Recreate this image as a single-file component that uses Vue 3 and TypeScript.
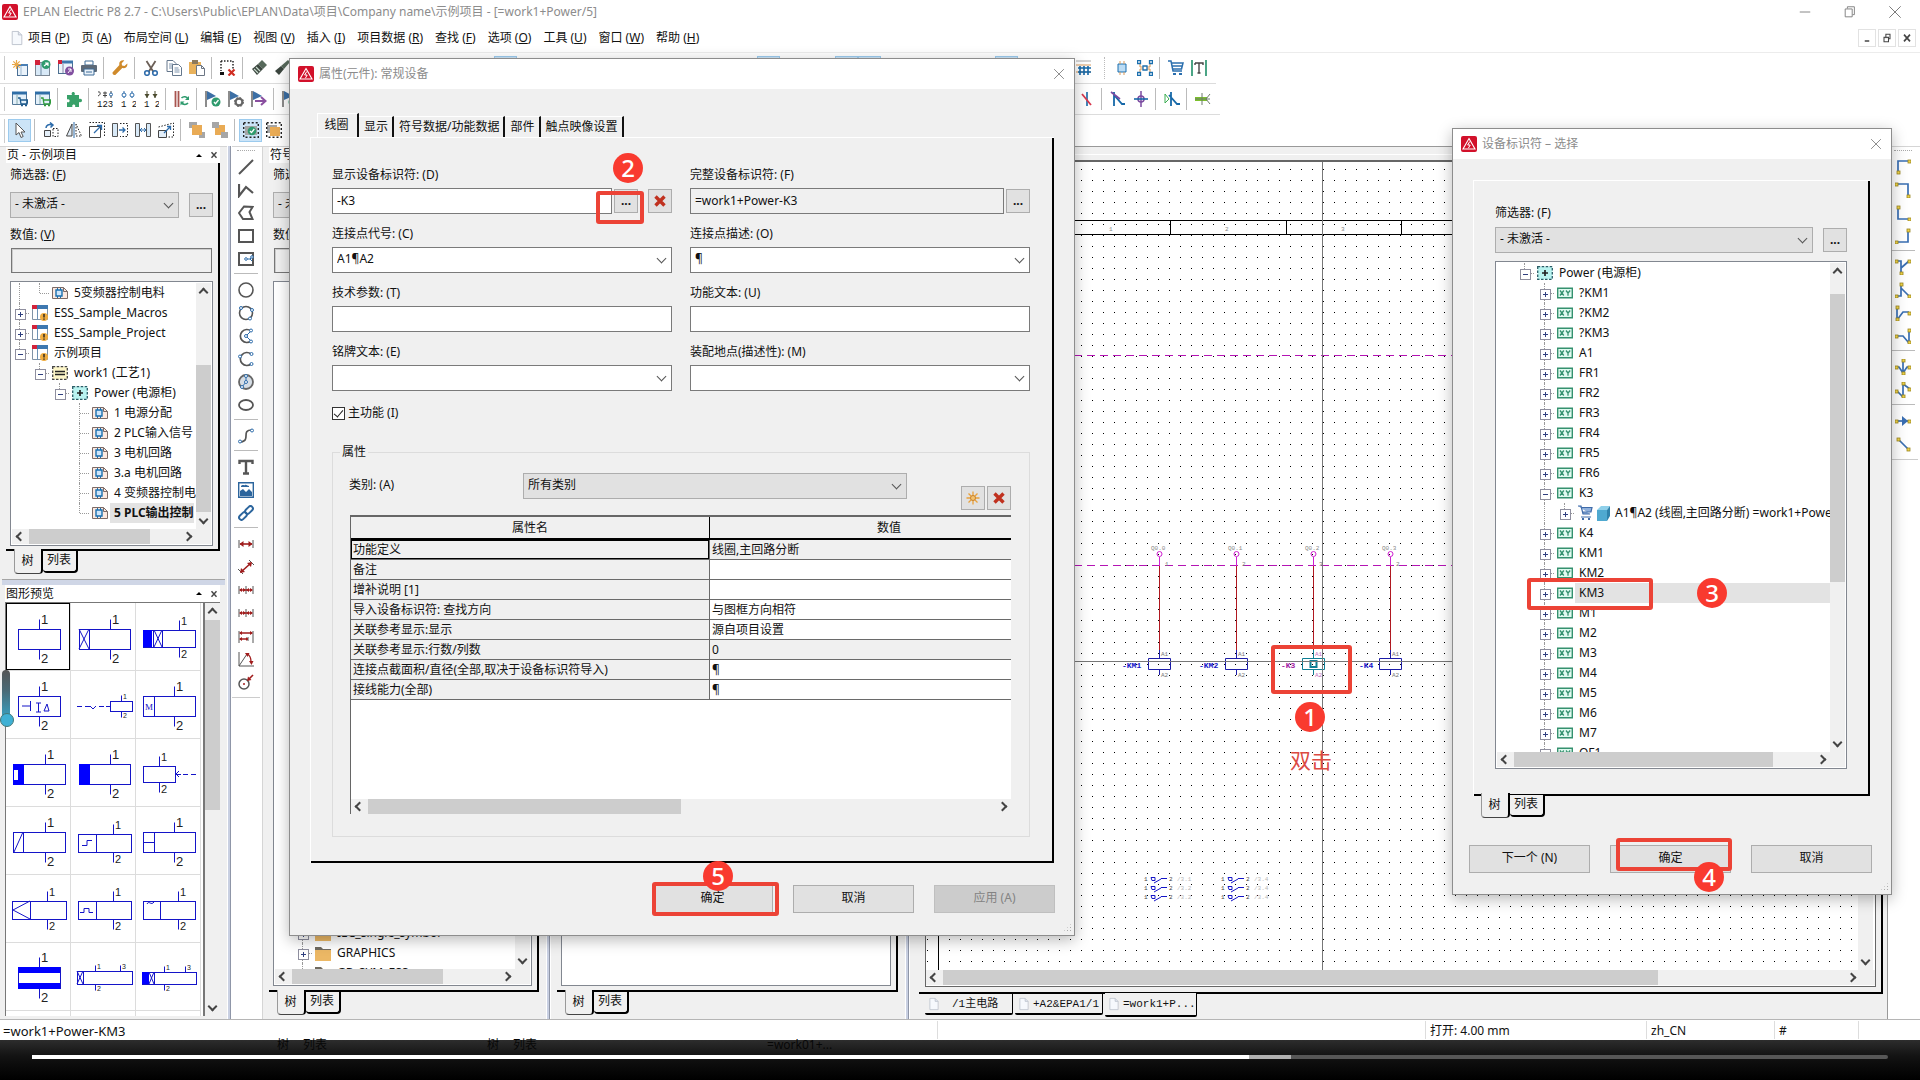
<script setup lang="ts">
import { ref } from 'vue'

interface TreeRow {
  cells: string[]
  icons: string[]
  text: string
  selected?: boolean
  bold?: boolean
}
interface Preview {
  x: number
  y: number
  w: number
  h: number
  stem: number
  size: number
  extra: string
  third?: number
}
interface Field {
  id: string
  label: string
  value: string
  kind: 'text' | 'combo' | 'pick' | 'readonly'
}

const icons: Record<string, string> = {
  logo: '<rect width="16" height="16" rx="2" fill="#d2112b"/><path d="M8 2.5 14 13H2Z" fill="none" stroke="#fff" stroke-width="1.1"/><path d="M8.8 5.5 6.6 9h2.6L7.4 12.2" fill="none" stroke="#fff" stroke-width="1"/>',
  file: '<path d="M2.5.5h7l4 4v11h-11z" fill="#f6f9fd" stroke="#b9bfca"/><path d="M9.5.5v4h4" fill="#dfe5ee" stroke="#b9bfca"/>',
  newProj: '<rect x="5.500" y="4.500" width="10" height="11" fill="#eaf3fb" stroke="#4a6f95"/><path d="M5 5h11" stroke="#4a7fb5" stroke-width="2"/><path d="M9 6v10" stroke="#9fb8cf"/><path d="M4.500 0v9M0 4.500h9M1.300 1.300l6.400 6.400M7.700 1.300 1.300 7.700" stroke="#e9a848" stroke-width="1.200"/>',
  openProj: '<rect x=".5" y="2.500" width="14" height="13" fill="#d8e9f7" stroke="#7b8794"/><path d="M6 3v12" stroke="#6f8aa3"/><path d="M0 0h5v5H0z" fill="#d2233a"/><circle cx="11" cy="4.500" r="4.500" fill="#2f9b6e"/><path d="m9 6 4-3m-3 0h3v3" stroke="#fff" stroke-width="1.200" fill="none"/>',
  closeProj: '<rect x=".5" y="1.500" width="14" height="12" fill="#eef5fb" stroke="#4d6f90"/><path d="M0 2h15" stroke="#3f77ad" stroke-width="3"/><path d="M5 4v9" stroke="#88a"/><path d="M0 0h4v4H0z" fill="#d2233a"/><circle cx="11.500" cy="11" r="4.500" fill="#8250a0"/><path d="m10 13 3-4m-3 0h3v3" stroke="#fff" fill="none"/>',
  print: '<path d="M4 1h8v4H4z" fill="#fff" stroke="#3f6c98"/><rect x="0" y="5" width="16" height="7" rx="1" fill="#5d6a78"/><path d="M3 9h10v6H3z" fill="#e9f1f9" stroke="#3f6c98"/><path d="M5 12h6" stroke="#3f6c98"/>',
  wrench: '<path d="M15.300 3.500 12.500 6 10 5.500 9.700 3.200 12.300.5c-3-.8-5.800 1.300-4.900 4.600L.7 12.300c-.8 1.400 1 3.400 2.600 2.600l7-6.900c3 .8 5.600-1.400 5-4.500Z" fill="#cf8a2b"/>',
  cut: '<path d="M3.500 1 10.500 12M12.500 1 5.500 12" stroke="#6b5f57" stroke-width="1.800"/><circle cx="4" cy="13" r="2.300" fill="none" stroke="#2f6cab" stroke-width="1.600"/><circle cx="12" cy="13" r="2.300" fill="none" stroke="#2f6cab" stroke-width="1.600"/>',
  copy: '<path d="M1 .5h6l3 3v8H1z" fill="#fff" stroke="#64778c"/><path d="M3 4h4M3 6h4M3 8h4" stroke="#7e95ae"/><path d="M6.500 4.500h6l3 3v8h-9z" fill="#fff" stroke="#64778c"/><path d="M8.500 8h4M8.500 10h5M8.500 12h5" stroke="#7e95ae"/>',
  paste: '<path d="M0 2h12v12H0z" fill="#e9b25c"/><path d="M3 0h6v4H3z" fill="#8d7a5c"/><path d="M7.500 5.500h5l3 3v7h-8z" fill="#fff" stroke="#6c7684"/><path d="M12.500 5.500v3h3" fill="none" stroke="#6c7684"/>',
  delSel: '<path d="M1 1h12v8M1 1v10" fill="none" stroke="#222" stroke-width="1.500" stroke-dasharray="1.500 1.500"/><path d="M0 12h4v3H0z" fill="#111"/><path d="m8.500 9.500 6 6m0-6-6 6" stroke="#d02d22" stroke-width="2.200"/>',
  brush: '<path d="M11 0 16 5 12 9 7 4Z" fill="#57695b"/><path d="M7 4 12 9 6 15 1 9Z" fill="#3b463f"/><path d="m3 9 4 4m-2-6 4 4" stroke="#c6d8cb" stroke-width="1.200"/>',
  brush2: '<path d="M14 0 16 2 10 9 7 6Z" fill="#57695b"/><path d="M7 6 10 9 5 15 1 11Z" fill="#3b463f"/>',
  cartWin: '<path d="M.5 1.500h14v12H.5z" fill="#e3f0fa" stroke="#527797"/><path d="M0 2h15" stroke="#2f6ea7" stroke-width="3"/><path d="M5 4v9" stroke="#8aa"/><path d="M6 7h2l1 6h6l1-4H8.500" fill="none" stroke="#1d5a8d" stroke-width="1.300"/><path d="M9 14.500h2m2 0h2" stroke="#1d5a8d" stroke-width="1.600"/>',
  cartWin2: '<path d="M.5 1.500h14v12H.5z" fill="#e3f0fa" stroke="#527797"/><path d="M0 2h15" stroke="#2f6ea7" stroke-width="3"/><path d="M5 4v9" stroke="#8aa"/><path d="M6 7h2l1 6h6l1-4H8.500" fill="none" stroke="#2f9a3c" stroke-width="1.300"/><path d="M9 14.500h2m2 0h2" stroke="#2f9a3c" stroke-width="1.600"/>',
  puzzle: '<path d="M1 4h5C4 0 10.500 0 8.500 4H13v4c4-1.500 4 4.500 0 3V16H9c1.500-3.500-4-3.500-2.500 0H1v-5c3.500 1.500 3.500-4 0-2.500Z" fill="#38a169"/>',
  num3: '<path d="M1 1c3-1 3 3 0 4M6 2h4M6 4.500h4M8 .5v6M14 0v7" stroke="#444" fill="none"/><circle cx="14" cy="3.500" r="1.500" fill="#fff" stroke="#2d6cab"/><text x="0" y="15.500" font-size="9" font-family="Liberation Mono" fill="#111">123</text>',
  num2: '<path d="M4 0v7M12 0v7" stroke="#2d6cab"/><circle cx="4" cy="4" r="2" fill="#fff" stroke="#2d6cab"/><circle cx="12" cy="4" r="2" fill="#fff" stroke="#2d6cab"/><text x="1" y="15.500" font-size="9" font-family="Liberation Mono" fill="#111">1 2</text>',
  num2b: '<path d="M4 0v7M12 0v7" stroke="#4b4b2f"/><path d="m1.500 3 2.500 4 2.500-4zM9.500 3l2.500 4 2.500-4z" fill="#4b4b2f"/><text x="1" y="15.500" font-size="9" font-family="Liberation Mono" fill="#111">1 2</text>',
  refresh: '<path d="M1.500 0v16M4.500 0v16" stroke="#a8544f" stroke-width="1.800"/><path d="M14 8A4 4 0 0 0 7.500 7M7.500 11.500A4 4 0 0 0 14 12" fill="none" stroke="#2f9b6e" stroke-width="1.600"/><path d="M15 5v4h-4zM6.500 14.500v-4h4z" fill="#2f9b6e"/>',
  flagOk: '<path d="M1 0v16" stroke="#666" stroke-width="1.500"/><path d="M2 0 11 5 2 9Z" fill="#3c6fa5"/><circle cx="11" cy="11" r="4.500" fill="#2f9b6e"/><path d="m9 11 1.500 1.700L13.500 9" fill="none" stroke="#fff" stroke-width="1.300"/>',
  flagGear: '<path d="M1 0v16" stroke="#666" stroke-width="1.500"/><path d="M2 0 11 5 2 9Z" fill="#3c6fa5"/><circle cx="11" cy="11" r="3.400" fill="none" stroke="#666" stroke-width="2.200"/><circle cx="11" cy="11" r="4.600" fill="none" stroke="#666" stroke-dasharray="1.800 1.800"/>',
  flagGo: '<path d="M1 0v16" stroke="#666" stroke-width="1.500"/><path d="M2 0 11 5 2 9Z" fill="#3c6fa5"/><path d="M4 10h10M10 6l4.500 4-4.500 4" fill="none" stroke="#8a4fa0" stroke-width="2"/>',
  pointer: '<path d="M4 1v12l3-2.500L9 15.500l2.200-1L9 10h4Z" fill="#fff" stroke="#555"/>',
  rotate: '<path d="M1.500 8.500h6v6h-6z" fill="#e3eef8" stroke="#444"/><path d="M10 6.500h5v8h-5z" fill="none" stroke="#222" stroke-dasharray="1.500 1.500"/><path d="M3 6c0-3 3-4 6-3M7 .5 10 3 7.500 5.500" fill="none" stroke="#2d6cab" stroke-width="1.500"/>',
  mirror: '<path d="M6 2v12H.5Z" fill="#e3eef8" stroke="#444"/><path d="M8 0v16" stroke="#2d6cab"/><path d="M10 2v12h5.500Z" fill="none" stroke="#222" stroke-dasharray="1.500 1.500"/>',
  scale: '<path d="M.5 4.500h11v11H.5z" fill="none" stroke="#444"/><path d="M.5.5h15v15" fill="none" stroke="#222" stroke-dasharray="1.500 1.500"/><path d="M5 11 12 4M8 3.500h4.500V8" fill="none" stroke="#2d6cab" stroke-width="1.300"/>',
  stretch: '<path d="M.5 1.500h5v13h-5z" fill="#d8e9f7" stroke="#555"/><path d="M8 1.500h7.500v13H8" fill="none" stroke="#222" stroke-dasharray="1.500 1.500"/><path d="M7 8h6m-2.500-2.500L13 8l-2.500 2.500" fill="none" stroke="#2d6cab" stroke-width="1.300"/>',
  spread: '<path d="M.5 1.500h4v13h-4zM11.500 1.500h4v13h-4z" fill="#d8e9f7" stroke="#555"/><path d="M5 8h6M9 6l2 2-2 2M7 6 5 8l2 2" fill="none" stroke="#2d6cab"/>',
  skew: '<path d="M.5 8.500h8v7h-8z" fill="#e3eef8" stroke="#444"/><path d="m.5 5 15-4v14H10" fill="none" stroke="#222" stroke-dasharray="1.500 1.500"/><path d="m6 11 6-6M9 4.500h3.500V8" fill="none" stroke="#2d6cab" stroke-width="1.300"/>',
  front: '<path d="M0 0h8v6H0zM10 10h6v6h-6z" fill="#a6a6a6"/><path d="M3 3h10v10H3z" fill="#e9ab55"/>',
  back: '<path d="M3 3h10v10H3z" fill="#e9ab55"/><path d="M0 0h7v6H0zM9 10h7v6H9z" fill="#a6a6a6"/>',
  group: '<path d="M2 4h12v9H2z" fill="#a6a6a6"/><path d="M.7.700h14.600v14.600H.7z" fill="none" stroke="#222" stroke-width="1.400" stroke-dasharray="2 2"/><circle cx="9" cy="9" r="4.300" fill="#2f9b6e"/><path d="m7 9 1.500 1.600L11.300 7" stroke="#fff" fill="none" stroke-width="1.300"/>',
  ungroup: '<path d="M1 3h10v8H1z" fill="#a6a6a6"/><path d="M4 5h10v9H4z" fill="#e9ab55"/><path d="M.7.700h14.600v14.600H.7z" fill="none" stroke="#222" stroke-width="1.400" stroke-dasharray="2 2"/>',
  hatch: '<path d="M0 1h15" stroke="#aaa"/><path d="M0 5h15M0 12h15" stroke="#d99a5a"/><path d="M4 6v9M8 6v9M12 6v9M2 8h13M2 12h13" stroke="#1668a8" stroke-width="1.600"/>',
  device: '<path d="M4 4h8v8H4z" fill="#bcdcf4" stroke="#1b6fae"/><path d="M6 1v3M10 1v3M6 12v3M10 12v3" stroke="#d99a5a"/>',
  net: '<path d="M3 2v5h10V2M3 14V9M13 14V9M3 9h10" stroke="#d9954f" fill="none"/><path d="M.5.5h3v3h-3zM12.500.5h3v3h-3zM.5 12.500h3v3h-3zM12.500 12.500h3v3h-3zM6 6h4v4H6z" fill="#fff" stroke="#1b6fae" stroke-width="1.300"/>',
  cart: '<path d="M0 1h3l2 10h9M4 3h11l-1.500 6H5M4.500 6H14" fill="none" stroke="#2b6fae" stroke-width="1.500"/><path d="M5 14h3m3 0h3" stroke="#2b6fae" stroke-width="2"/>',
  textT: '<path d="M1 0v16M15 0v16" stroke="#1e8f68" stroke-width="1.600"/><path d="M4 3h8v2M8 3v10M6.500 13h3M4 3v2" fill="none" stroke="#444" stroke-width="1.400"/>',
  sym1: '<path d="M8 1v14" stroke="#1668a8" stroke-width="1.600"/><path d="m3 3 9 11" stroke="#d8374d" stroke-width="1.800"/>',
  sym2: '<path d="M4 1v14M4 4l8 9h3" stroke="#1668a8" stroke-width="1.800" fill="none"/><path d="m1 1 9 7" stroke="#7a4aa0" stroke-width="1.600"/>',
  sym3: '<path d="M8 0v16" stroke="#7a4aa0" stroke-width="1.500"/><circle cx="8" cy="8" r="3" fill="none" stroke="#7a4aa0" stroke-width="1.500"/><path d="M1 8h14" stroke="#1668a8" stroke-width="1.600"/>',
  sym4: '<path d="M7 1v14M5 4l8 9h3" stroke="#1668a8" stroke-width="1.800" fill="none"/><path d="M1 3v9l4-4z" fill="none" stroke="#3cae52"/>',
  sym5: '<path d="M0 8h12" stroke="#7cc02c" stroke-width="4"/><path d="M7 2v12M0 8h15M15 3l-4 5 4 5" stroke="#6c7a6c" fill="none"/>',
  dLine: '<path d="M1 15 15 1" stroke="#555" stroke-width="2"/>',
  dPoly: '<path d="M1 2v12l7-9 7 6" fill="none" stroke="#555" stroke-width="2.200"/>',
  dPolygon: '<path d="m6 1.500 8.500.500-3 5 3 7H5L1 8Z" fill="none" stroke="#555" stroke-width="2"/>',
  dRect: '<path d="M1 2h14v12H1z" fill="none" stroke="#555" stroke-width="2"/>',
  dRectC: '<path d="M1 2h14v12H1z" fill="none" stroke="#555" stroke-width="2"/><path d="M7 8h5l2-2m-2 2 2 2" stroke="#2d6cab" fill="none"/><circle cx="8" cy="8" r="1.300" fill="#fff" stroke="#2d6cab"/><circle cx="14" cy="6" r="1.300" fill="#fff" stroke="#2d6cab"/>',
  dCircle: '<circle cx="8" cy="8" r="7" fill="none" stroke="#555" stroke-width="1.600"/>',
  dCircle3: '<circle cx="8" cy="8" r="6.500" fill="none" stroke="#555" stroke-width="1.600"/><g fill="#fff" stroke="#2d6cab"><circle cx="3" cy="3" r="1.500"/><circle cx="14" cy="5" r="1.500"/><circle cx="12" cy="13.500" r="1.500"/></g>',
  dArc: '<path d="M13 3A6.500 6.500 0 1 0 13 13" fill="none" stroke="#555" stroke-width="1.700"/><path d="m13 3-5 5 5 5" fill="none" stroke="#2d6cab"/><g fill="#fff" stroke="#2d6cab"><circle cx="13" cy="2.500" r="1.500"/><circle cx="8" cy="8" r="1.500"/><circle cx="13" cy="13.500" r="1.500"/></g>',
  dArc3: '<path d="M13 3A6.500 6.500 0 1 0 13 13" fill="none" stroke="#555" stroke-width="1.700"/><g fill="#fff" stroke="#2d6cab"><circle cx="13.500" cy="3" r="1.500"/><circle cx="2" cy="5.500" r="1.500"/><circle cx="13.500" cy="13" r="1.500"/></g>',
  dSector: '<circle cx="8" cy="8" r="7" fill="#d5dde5" stroke="#666" stroke-width="1.800"/><path d="M8 1v7l-4 5" fill="none" stroke="#2d6cab"/><g fill="#fff" stroke="#2d6cab"><circle cx="8" cy="2" r="1.500"/><circle cx="8" cy="8" r="1.500"/><circle cx="4" cy="13" r="1.500"/></g>',
  dEllipse: '<ellipse cx="8" cy="8" rx="7" ry="5" fill="none" stroke="#555" stroke-width="1.800"/>',
  dSpline: '<path d="M2 14c12-1 0-12 12-12" fill="none" stroke="#555" stroke-width="1.700"/><g fill="#fff" stroke="#2d6cab"><circle cx="2" cy="13.500" r="1.500"/><circle cx="14" cy="2.500" r="1.500"/></g>',
  dText: '<path d="M1.500 5V2h13v3M8 2v12M5 14.500h6" fill="none" stroke="#555" stroke-width="2.400"/>',
  dImage: '<path d="M.7.700h14.600v14.600H.7z" fill="#fff" stroke="#2c659d" stroke-width="1.400"/><path d="M2 14V9l3-2 3 3 3-3 3 3v4Z" fill="#2c659d"/><path d="M3 4c2-2 3 0 4-1s3 1 4 1v1H3z" fill="#2c659d"/>',
  dLink: '<g fill="none" stroke="#2c659d" stroke-width="1.900"><rect x="-4.500" y="-2.400" width="9" height="4.800" rx="2.400" transform="translate(5 11) rotate(-45)"/><rect x="-4.500" y="-2.400" width="9" height="4.800" rx="2.400" transform="translate(11 5) rotate(-45)"/></g>',
  dimH: '<path d="M1 4v8M15 4v8" stroke="#555"/><path d="M2 8h12" stroke="#a01c1c" stroke-width="1.600"/><path d="m1.500 8 4-3v6zM14.500 8l-4-3v6z" fill="#a01c1c"/>',
  dimA: '<path d="m0 10 5 5M11 1l5 5" stroke="#555"/><path d="m3 13 10-9" stroke="#a01c1c" stroke-width="1.600"/><path d="m2 14 1-5 4 4zM14 3l-1 5-4-4z" fill="#a01c1c"/>',
  dimC: '<path d="M1 4v8M8 4v8M15 4v8" stroke="#555"/><path d="M2 8h12" stroke="#a01c1c" stroke-width="1.400"/><path d="m1 8 3-2v4zM8 8 5 6v4zM8 8l3-2v4zM15 8l-3-2v4z" fill="#a01c1c"/>',
  dimB: '<path d="M1 3v12M15 3v12M10 9v4" stroke="#555"/><path d="M2 5h12M2 11h8" stroke="#a01c1c" stroke-width="1.500"/><path d="m1 5 3-2v4zM15 5l-3-2v4zM1 11l3-2v4zM10 11 8 9v4z" fill="#a01c1c"/>',
  dimAng: '<path d="M1 1v14h15M1 15 9 3" fill="none" stroke="#555"/><path d="M9 3c3 1 4 4 4 8" fill="none" stroke="#a01c1c" stroke-width="1.300"/><path d="m7 2 4.500 0-2 4zM11 10h4.500l-2 4z" fill="#a01c1c"/>',
  dimRad: '<circle cx="6" cy="10" r="5" fill="none" stroke="#555" stroke-width="1.500"/><circle cx="6" cy="10" r="1" fill="#a01c1c"/><path d="m10 6 5-5" stroke="#a01c1c" stroke-width="1.600"/><path d="m9 7 1-4.500 3.500 3.500z" fill="#a01c1c"/>',
  treeProj: '<path d="M.5 1.500h15v13H.5z" fill="#fff" stroke="#8193a5"/><path d="M0 2h16" stroke="#3e78b0" stroke-width="4"/><path d="M0 0h5v4H0z" fill="#d2233a"/><path d="M5.500 4v11" stroke="#6f93b6"/><circle cx="12" cy="12" r="4" fill="#f0ac3e"/><path d="M12 9v3.500M12 13.500v1.300" stroke="#222" stroke-width="1.400"/>',
  treePage: '<path d="M.5 2.500h11l4 4v7H.5z" fill="#fce9e0" stroke="#7b6a66"/><path d="M11.500 2.500v4h4" fill="none" stroke="#7b6a66"/><path d="M4 5h6v6H4z" fill="#cfe6fb" stroke="#1b6fae" stroke-width="1.400"/><path d="M5.500 3v2M8.500 3v2M5.500 11v2M8.500 11v2" stroke="#1b6fae"/>',
  treeHigh: '<path d="M.7 1.700h14.600v12.600H.7z" fill="#fdf6c8" stroke="#444" stroke-width="1.300" stroke-dasharray="2.500 1.500"/><path d="M3 6.500h10M3 9.500h10" stroke="#222" stroke-width="1.500"/>',
  treePlace: '<path d="M.7 1.700h14.600v12.600H.7z" fill="#b9f3f0" stroke="#2a5c66" stroke-width="1.300" stroke-dasharray="2.500 1.500"/><path d="M5 8h6M8 5v6" stroke="#222" stroke-width="1.700"/>',
  treeXY: '<path d="M.7 3.200h14.600v9.600H.7z" fill="#e0faf0" stroke="#35916f" stroke-width="1.400"/><path d="m3 5.500 3.800 5M6.800 5.500 3 10.500M9 5.500l2 2.500m2.200-2.500L11 8v2.700" stroke="#35916f" stroke-width="1.300" fill="none"/>',
  treeCart: '<path d="M1 1h3l2 8h7M5 2.500h10L14 7H5.500" fill="#8fb0dc" stroke="#3f6aa8" stroke-width="1.200"/><path d="M4 12h10" stroke="#3f6aa8"/><path d="M5 14h2m4 0h2" stroke="#3f6aa8" stroke-width="2"/>',
  treeCube: '<path d="M2 5 6 1h9l-3 4Z" fill="#8fd0ea"/><path d="M2 5h10v11H2z" fill="#4fa9d0"/><path d="M12 5l3-4v10l-3 5z" fill="#2f82ab"/>',
  treeFolder: '<path d="M0 2h6l2 2h8v2H0z" fill="#6f6a60"/><path d="M0 5h16v11H0z" fill="#ecb865"/>',
  star: '<path d="M8 1.500v13M1.500 8h13M3.500 3.500l9 9m0-9-9 9" stroke="#e9a03a" stroke-width="1.300"/><circle cx="8" cy="8" r="2.500" fill="#f3c26f" stroke="#c9822b"/>',
  cross: '<path d="m3.500 3.500 9 9m0-9-9 9" stroke="#c0311f" stroke-width="3.400"/>',
  x: '<path d="m1.500 1.500 13 13m0-13-13 13" stroke="#777" stroke-width="1.100"/>',
  min: '<path d="M2 8h12" stroke="#777"/>',
  restore: '<path d="M2.500 4.500h8v9h-8zM5 4V2h8v9h-2" fill="none" stroke="#777"/>',
  mMin: '<path d="M5 12h6" stroke="#444" stroke-width="2"/>',
  mRest: '<path d="M4 7h6v6H4zM6.500 6.500V3H12v6h-2" fill="none" stroke="#444" stroke-width="1.400"/><path d="M4 7.500h6" stroke="#444"/>',
  mX: '<path d="m4 3.500 8 9m0-9-8 9" stroke="#444" stroke-width="2.200"/>',
}

const node = (x: number, y: number): string =>
  `<rect x="${x - 1}" y="${y - 1}" width="3" height="3" fill="#f0d54a" stroke="#9a8420" stroke-width=".8"/>`
const wire = (d: string, pts: number[][]): string =>
  `<path d="${d}" fill="none" stroke="#3a6fb3" stroke-width="1.700"/>` + pts.map((p) => node(p[0], p[1])).join('')
Object.assign(icons, {
  w1: wire('M3 13V2h12', [[3, 13], [14, 2]]),
  w2: wire('M2 2h11v12', [[1, 2], [13, 14]]),
  w3: wire('M3 2v12h12', [[3, 2], [14, 14]]),
  w4: wire('M2 14h11V3', [[1, 14], [13, 2]]),
  w5: wire('M2 2h4v12M6 9l8-7', [[1, 2], [14, 2], [6, 14]]),
  w6: wire('M6 2v12H2M6 6l8 8', [[6, 2], [1, 14], [14, 14]]),
  w7: wire('M2 2v13l6-8h6', [[2, 2], [2, 14], [14, 8]]),
  w8: wire('M2 8h6l6 7V2', [[1, 8], [14, 2], [14, 14]]),
  w9: wire('M8 1v14M2 8h2l4 6 4-6h3', [[8, 1], [1, 8], [14, 8], [8, 14]]),
  w10: wire('M8 1v14L2 9M8 2l7 5', [[8, 1], [1, 9], [14, 7], [8, 14]]),
  w11: '<path d="M1 8h14" stroke="#3a6fb3" stroke-width="1.700"/><path d="M7 3v10l6-5z" fill="#3a6fb3"/>' + node(1, 8) + node(14, 8),
  w12: wire('m3 3 10 10', [[3, 3], [13, 13]]),
})

const menus: [string, string][] = [
  ['项目', 'P'], ['页', 'A'], ['布局空间', 'L'], ['编辑', 'E'], ['视图', 'V'], ['插入', 'I'],
  ['项目数据', 'R'], ['查找', 'F'], ['选项', 'O'], ['工具', 'U'], ['窗口', 'W'], ['帮助', 'H'],
]

const toolbars: (string | number)[][] = [
  ['newProj', 'openProj', 'closeProj', 'print', '|', 'wrench', '|', 'cut', 'copy', 'paste', '|', 'delSel', '|', 'brush', 'brush2',
    201, 'on', 240, 'on', 55, 'on', 'on', 114, 'on', 54, 'hatch', 9, ':', 'device', 'net', '|', 'cart', 'textT'],
  ['cartWin', 'cartWin2', '|', 'puzzle', '|', 'num3', 'num2', 'num2b', '|', 'refresh', '|', 'flagOk', 'flagGear', 'flagGo', '|', 'flagOk',
    774, 'sym1', '|', 'sym2', 'sym3', '|', 'sym4', '|', 'sym5'],
  ['pointer', '|', 'rotate', 'mirror', 'scale', 'stretch', 'spread', 'skew', '|', 'front', 'back', '|', 'group', 'ungroup'],
]
const active = new Set(['pointer', 'group', 'on'])

const drawTools = ['dLine', 'dPoly', 'dPolygon', 'dRect', 'dRectC', '|', 'dCircle', 'dCircle3', 'dArc', 'dArc3', 'dSector', 'dEllipse', '|',
  'dSpline', '|', 'dText', 'dImage', 'dLink', '|', 'dimH', 'dimA', 'dimC', 'dimC', 'dimB', 'dimAng', 'dimRad']
const wireTools = ['w1', 'w2', 'w3', 'w4', '|', 'w5', 'w6', 'w7', 'w8', '|', 'w9', 'w10', '|', 'w11', 'w12']

const pageTree: TreeRow[] = [
  { cells: ['v', 'l'], icons: ['treePage'], text: '5变频器控制电料' },
  { cells: ['+'], icons: ['treeProj'], text: 'ESS_Sample_Macros' },
  { cells: ['+'], icons: ['treeProj'], text: 'ESS_Sample_Project' },
  { cells: ['-'], icons: ['treeProj'], text: '示例项目' },
  { cells: ['', '-'], icons: ['treeHigh'], text: 'work1 (工艺1)' },
  { cells: ['', '', '-'], icons: ['treePlace'], text: 'Power (电源柜)' },
  { cells: ['', '', '', 't'], icons: ['treePage'], text: '1 电源分配' },
  { cells: ['', '', '', 't'], icons: ['treePage'], text: '2 PLC输入信号' },
  { cells: ['', '', '', 't'], icons: ['treePage'], text: '3 电机回路' },
  { cells: ['', '', '', 't'], icons: ['treePage'], text: '3.a 电机回路' },
  { cells: ['', '', '', 't'], icons: ['treePage'], text: '4 变频器控制电' },
  { cells: ['', '', '', 'l'], icons: ['treePage'], text: '5 PLC输出控制', selected: true, bold: true },
]
const symbolTree: TreeRow[] = ['IEC_single_symbol', 'GRAPHICS', 'GB_SYM_ESS'].map((text) => ({ cells: ['', '+'], icons: ['treeFolder'], text }))

const device = (text: string): TreeRow => ({ cells: ['', '', text === 'K3' ? '=' : '+'], icons: ['treeXY'], text, selected: text === 'KM3' })
const deviceTree: TreeRow[] = [
  { cells: ['', '-'], icons: ['treePlace'], text: 'Power (电源柜)' },
  ...['?KM1', '?KM2', '?KM3', 'A1', 'FR1', 'FR2', 'FR3', 'FR4', 'FR5', 'FR6', 'K3'].map(device),
  { cells: ['', '', 'v', '-+'], icons: ['treeCart', 'treeCube'], text: 'A1¶A2 (线圈,主回路分断) =work1+Power-K3' },
  ...['K4', 'KM1', 'KM2', 'KM3', 'M1', 'M2', 'M3', 'M4', 'M5', 'M6', 'M7', 'QF1'].map(device),
]

const blue = 'fill="none" stroke="#1414c8"'
const previews: Preview[] = [
  { x: 12, y: 26, w: 42, h: 20, stem: 33, size: 13, extra: '' },
  { x: 8, y: 26, w: 51, h: 20, stem: 39, size: 13, extra: `<path d="M18.500 26v20M8 26l10 20M18 26 8 46" ${blue}/>` },
  { x: 7, y: 27, w: 52, h: 17, stem: 43, size: 11, extra: `<path d="M7 27h9v17H7z" fill="#00f"/><path d="M17.500 27v17M26.500 27v17M18 27l8 17M26 27l-8 17" ${blue}/>` },
  { x: 12, y: 25, w: 42, h: 20, stem: 33, size: 13, extra: `<path d="M16 35h8M24.500 30v10M30 32h5M32.500 32v9M30 41h5M41 33l-3 7h5z" ${blue}/>` },
  { x: 39, y: 30, w: 22, h: 10, stem: 50, size: 7, extra: `<path d="M6 35.500h5M14 35.500h5M19 35l3 3 3-3M28 35.500h5M35 35.500h4" ${blue}/>` },
  { x: 7, y: 25, w: 52, h: 20, stem: 38, size: 13, extra: `<path d="M18.500 25v20" ${blue}/><text x="9" y="39" font-size="9" fill="#1414c8" font-family="Liberation Serif">M</text>` },
  { x: 7, y: 25, w: 52, h: 20, stem: 39, size: 13, extra: '<path d="M7 25h11v21H7z" fill="#00f"/><path d="M8 31h4v10H8z" fill="#fff"/>' },
  { x: 8, y: 25, w: 51, h: 20, stem: 39, size: 13, extra: '<path d="M8 25h11v21H8z" fill="#00f"/>' },
  { x: 7, y: 27, w: 32, h: 16, stem: 23, size: 11, extra: `<path d="M39 35.500h6M43 32l-3 3 3 3M47 35.500h5M55 35.500h5" ${blue}/>` },
  { x: 7, y: 25, w: 52, h: 20, stem: 39, size: 13, extra: `<path d="M17.500 25v20M8 45l9-20" ${blue}/>` },
  { x: 7, y: 27, w: 53, h: 18, stem: 42, size: 11, extra: `<path d="M25.500 27v18M11 38.500h5v-5h5" ${blue}/>` },
  { x: 7, y: 25, w: 52, h: 20, stem: 38, size: 13, extra: `<path d="M18.500 25v20M7 35.500h11" ${blue}/>` },
  { x: 6, y: 26, w: 54, h: 18, stem: 41, size: 11, extra: `<path d="M24.500 26v18M24 26 7 35l17 9" ${blue}/>` },
  { x: 7, y: 26, w: 53, h: 18, stem: 42, size: 11, extra: `<path d="M25.500 26v18M9 37.500h4v-4h5v4h4" ${blue}/>` },
  { x: 7, y: 26, w: 52, h: 18, stem: 42, size: 11, extra: `<path d="M24.500 26v18M11 29c2-4 4 2 7-2" ${blue}/>` },
  { x: 12, y: 24, w: 42, h: 21, stem: 33, size: 13, extra: '<path d="M12 24h42v6H12zM12 40h42v6H12z" fill="#00f"/>' },
  { x: 6, y: 28, w: 55, h: 13, stem: 24, size: 7, third: 49, extra: `<path d="M12.500 28v13M6 28l6 13M12 28 6 41" ${blue}/>` },
  { x: 6, y: 29, w: 54, h: 12, stem: 28, size: 7, third: 49, extra: `<path d="M6 29h7v12H6z" fill="#00f"/><path d="M18.500 29v12M13 29l5 12M18 29l-5 12" ${blue}/>` },
]

const fields: Field[] = [
  { id: 'tag', label: '显示设备标识符: (D)', value: '-K3', kind: 'pick' },
  { id: 'fulltag', label: '完整设备标识符: (F)', value: '=work1+Power-K3', kind: 'readonly' },
  { id: 'conn', label: '连接点代号: (C)', value: 'A1¶A2', kind: 'combo' },
  { id: 'conndesc', label: '连接点描述: (O)', value: '¶', kind: 'combo' },
  { id: 'tech', label: '技术参数: (T)', value: '', kind: 'text' },
  { id: 'func', label: '功能文本: (U)', value: '', kind: 'text' },
  { id: 'plate', label: '铭牌文本: (E)', value: '', kind: 'combo' },
  { id: 'mount', label: '装配地点(描述性): (M)', value: '', kind: 'combo' },
]
const properties: [string, string, boolean][] = [
  ['功能定义', '线圈,主回路分断', true],
  ['备注', '', false],
  ['增补说明 [1]', '', false],
  ['导入设备标识符: 查找方向', '与图框方向相符', false],
  ['关联参考显示:显示', '源自项目设置', false],
  ['关联参考显示:行数/列数', '0', true],
  ['连接点截面积/直径(全部,取决于设备标识符导入)', '¶', false],
  ['接线能力(全部)', '¶', false],
]

const coils = [
  { x: 1159, name: '-KM1', out: 'Q0.0', pin: '1', nx: 1122 },
  { x: 1236, name: '-KM2', out: 'Q0.1', pin: '2', nx: 1199 },
  { x: 1313, name: '-K3', out: 'Q0.2', pin: '3', nx: 1281, picked: true },
  { x: 1390, name: '-K4', out: 'Q0.3', pin: '2', nx: 1359 },
]
const contacts = [
  { x: 1144, refs: ['/3.1', '/3.2', '/3.2'] },
  { x: 1221, refs: ['/3.4', '/3.4', '/3.4'] },
]
const mainFunction = ref(true)
</script>

<template>
  <div class="app">
    <header class="titlebar">
      <svg class="ic" viewBox="0 0 16 16" v-html="icons.logo"></svg>
      <span>EPLAN Electric P8 2.7 - C:\Users\Public\EPLAN\Data\项目\Company name\示例项目 - [=work1+Power/5]</span>
      <div class="winctl">
        <button v-for="n in ['min', 'restore', 'x']" :key="n" :aria-label="n"><svg viewBox="0 0 16 16" v-html="icons[n]"></svg></button>
      </div>
    </header>
    <nav class="menubar">
      <svg class="ic" viewBox="0 0 16 16" v-html="icons.file"></svg>
      <a v-for="m in menus" :key="m[0]" href="#">{{ m[0] }} (<u>{{ m[1] }}</u>)</a>
      <div class="mdictl">
        <button v-for="n in ['mMin', 'mRest', 'mX']" :key="n" :aria-label="n"><svg viewBox="0 0 16 16" v-html="icons[n]"></svg></button>
      </div>
    </nav>
    <div class="toolbars">
      <div v-for="(bar, b) in toolbars" :key="b" class="toolbar">
        <template v-for="(t, i) in bar" :key="i">
          <i v-if="typeof t === 'number'" class="space" :style="{ width: t + 'px' }"></i>
          <i v-else-if="t === '|'" class="sep"></i>
          <i v-else-if="t === ':'" class="grip"></i>
          <button v-else class="tool" :class="{ on: active.has(t) }" :aria-label="t">
            <svg class="ic" viewBox="0 0 16 16" v-html="icons[t]"></svg>
          </button>
        </template>
      </div>
    </div>

    <main class="main">
      <aside class="left">
        <section class="panel">
          <div class="phead"><span>页 - 示例项目</span><b class="tri"></b><svg class="px" viewBox="0 0 16 16" v-html="icons.mX"></svg></div>
          <div class="pbody">
            <label for="pf">筛选器: (<u>F</u>)</label>
            <div class="frow">
              <div class="sel gray"><select id="pf"><option>- 未激活 -</option></select><i class="chev"></i></div>
              <button class="btn dots">...</button>
            </div>
            <label for="pv">数值: (<u>V</u>)</label>
            <input id="pv" class="sunk" type="text" />
            <div class="treebox page">
              <div class="tview">
                <div v-for="(r, i) in pageTree" :key="i" class="trow">
                  <i v-for="(c, j) in r.cells" :key="j" class="cell" :class="'c' + ({ '+': 'plus', '-': 'minus', v: 'v', l: 'l', t: 't' }[c] ?? '')"></i>
                  <span v-for="n in r.icons" :key="n" class="ticon"><svg class="ic" viewBox="0 0 16 16" v-html="icons[n]"></svg></span>
                  <span class="ttext" :class="{ sel0: r.selected, bold: r.bold }">{{ r.text }}</span>
                </div>
              </div>
              <div class="vs"><i class="ar up"></i><i style="flex: 63"></i><i class="thumb" style="flex: 141"></i><i class="ar down"></i></div>
              <div class="hs"><i class="ar lt"></i><i class="thumb" style="flex: 122"></i><i style="flex: 29"></i><i class="ar rt"></i></div>
            </div>
          </div>
          <div class="btabs"><button class="cur">树</button><button>列表</button></div>
        </section>
        <div class="hsplit"></div>
        <section class="preview">
          <div class="phead"><span>图形预览</span><b class="tri"></b><svg class="px" viewBox="0 0 16 16" v-html="icons.mX"></svg></div>
          <div class="pvbody">
            <div class="pvgrid">
              <div v-for="(p, i) in previews" :key="i" class="pvcell" :class="{ first: i === 0 }">
                <svg viewBox="0 0 65 68">
                  <g transform="translate(0.5 0.5)" fill="none" stroke="#1414c8">
                    <rect :x="p.x" :y="p.y" :width="p.w" :height="p.h" />
                    <path :d="`M${p.stem} ${p.y - (p.size > 7 ? 10 : 6)}V${p.y}M${p.stem} ${p.y + p.h}v${p.size > 7 ? 10 : 6}`" />
                    <path v-if="p.third" :d="`M${p.third} ${p.y - 6}v6`" />
                  </g>
                  <g v-html="p.extra"></g>
                  <g class="pin" :font-size="p.size">
                    <text :x="p.stem + 2" :y="p.y - (p.size > 7 ? 5 : 2)">1</text>
                    <text :x="p.stem + 2" :y="p.y + p.h + (p.size > 11 ? 14 : p.size > 7 ? 11 : 7)">2</text>
                    <text v-if="p.third" :x="p.third + 2" :y="p.y - 2">3</text>
                  </g>
                </svg>
              </div>
              <div v-for="k in 3" :key="'e' + k" class="pvcell"></div>
            </div>
            <div class="vs"><i class="ar up"></i><i class="thumb" style="flex: 189"></i><i style="flex: 189"></i><i class="ar down"></i></div>
          </div>
        </section>
        <div class="gauge"></div>
      </aside>
      <div class="vsplit"></div>
      <div class="vtools">
        <i class="vgrip"></i>
        <template v-for="(t, i) in drawTools" :key="i">
          <i v-if="t === '|'" class="vsep"></i>
          <button v-else class="tool" :aria-label="t"><svg class="ic" viewBox="0 0 16 16" v-html="icons[t]"></svg></button>
        </template>
        <i class="vend"></i>
      </div>

      <section class="panel mid">
        <div class="phead"><span>符号选择</span></div>
        <div class="pbody">
          <label for="sf">筛选器: (<u>F</u>)</label>
          <div class="frow">
            <div class="sel gray"><select id="sf"><option>- 未激活 -</option></select><i class="chev"></i></div>
            <button class="btn dots">...</button>
          </div>
          <label for="sv">数值: (<u>V</u>)</label>
          <input id="sv" class="sunk" type="text" />
          <div class="treebox">
            <div class="tview end">
              <div v-for="(r, i) in symbolTree" :key="i" class="trow">
                <i class="cell"></i><i class="cell cplus"></i>
                <span class="ticon"><svg class="ic" viewBox="0 0 16 16" v-html="icons.treeFolder"></svg></span>
                <span class="ttext">{{ r.text }}</span>
              </div>
            </div>
            <div class="vs"><i class="ar up"></i><i class="thumb" style="flex: 1"></i><i style="flex: 5"></i><i class="ar down"></i></div>
            <div class="hs"><i class="ar lt"></i><i class="thumb" style="flex: 152"></i><i style="flex: 56"></i><i class="ar rt"></i></div>
          </div>
        </div>
        <div class="btabs"><button class="cur">树</button><button>列表</button></div>
      </section>
      <div class="vsplit"></div>
      <section class="panel mid wide">
        <div class="phead"></div>
        <div class="pbody"><div class="treebox plain"></div></div>
        <div class="btabs"><button class="cur">树</button><button>列表</button></div>
      </section>
      <div class="vsplit"></div>

      <section class="editor">
        <div class="sheet">
          <div class="board">
            <svg class="canvas">
              <defs>
                <pattern id="dots" x="1081" y="521" width="11" height="11" patternUnits="userSpaceOnUse"><rect width="1" height="1" fill="#000" /></pattern>
              </defs>
              <g transform="translate(-926 -162)">
                <rect x="926" y="162" width="2000" height="2000" fill="url(#dots)" />
                <path d="M938.500 162V2000M926 220.500H2900M926 234.500H2900M1055.500 220v14M1170.500 220v14M1286.500 220v14M1401.500 220v14" stroke="#000" fill="none" />
                <g class="tiny" fill="#888"><text x="1109" y="231">1</text><text x="1225" y="231">2</text><text x="1341" y="231">3</text></g>
                <path d="M1074 355.500H2900M1074 565.500H2900" stroke="#b414b4" stroke-dasharray="8 5" fill="none" />
                <g v-for="c in coils" :key="c.name" fill="none">
                  <path :d="`M${c.x + .5} 565v85`" stroke="#b01820" />
                  <path :d="`M${c.x + .5} 557v9`" stroke="#d020d0" />
                  <circle :cx="c.x + .5" cy="554" r="2.500" stroke="#d020d0" />
                  <path :d="`M${c.x + .5} 650v8M${c.x + .5} 669v6M${c.x - 10.5} 658.500h22v11h-22z`" :stroke="c.picked ? '#0e7f95' : '#1c1ca8'" />
                  <rect v-if="c.picked" :x="c.x - 2.5" y="661" width="6" height="6" stroke="#0e7f95" stroke-width="2" />
                  <text class="tiny" :x="c.x - 8" y="550" fill="#8a8a8a">{{ c.out }}</text>
                  <text class="tiny" :x="c.x + 6" y="566" fill="#777">{{ c.pin }}</text>
                  <text class="tiny" :x="c.x + 2" y="656" :fill="c.picked ? '#c070c0' : '#777'">A1</text>
                  <text class="tiny" :x="c.x + 2" y="677" :fill="c.picked ? '#c070c0' : '#777'">A2</text>
                  <text class="cname" :x="c.nx" y="668" :fill="c.picked ? '#a018a0' : '#1414c8'">{{ c.name }}</text>
                </g>
                <g v-for="k in contacts" :key="k.x">
                  <g v-for="(r, i) in k.refs" :key="i" :transform="`translate(${k.x} ${879 + i * 9})`">
                    <text class="tiny" y="2" fill="#444">1</text>
                    <path d="M7 -1.500h4v3h-3zM10 4 17 0M17 -.5h6" fill="none" stroke="#1414c8" />
                    <text class="tiny" x="25" y="2" fill="#444">2</text>
                    <text class="tiny" x="33" y="2" fill="#b8b8b8">{{ r }}</text>
                  </g>
                </g>
                <path d="M1322.500 162V2000M926 661.500H2900" stroke="#777" fill="none" />
              </g>
            </svg>
            <div class="vs"><i class="ar up"></i><i class="thumb" style="flex: 3"></i><i style="flex: 1"></i><i class="ar down"></i></div>
            <div class="hs"><i class="ar lt"></i><i class="thumb" style="flex: 713"></i><i style="flex: 184"></i><i class="ar rt"></i></div>
          </div>
        </div>
        <div class="etabs">
          <button v-for="(t, i) in ['/1主电路', '+A2&EPA1/1', '=work1+P...']" :key="t" :class="{ cur: i === 2 }">
            <svg class="ic" viewBox="0 0 16 16" v-html="icons.file"></svg><span>{{ t }}</span>
          </button>
        </div>
      </section>
      <div class="vtools right">
        <i class="vgrip"></i>
        <template v-for="(t, i) in wireTools" :key="i">
          <i v-if="t === '|'" class="vsep"></i>
          <button v-else class="tool" :aria-label="t"><svg class="ic" viewBox="0 0 16 16" v-html="icons[t]"></svg></button>
        </template>
        <i class="vend"></i>
      </div>
    </main>

    <footer class="status">
      <span class="s0">=work1+Power-KM3</span><span class="s1"></span><span class="s2">打开: 4.00 mm</span><span class="s3">zh_CN</span><span class="s4">#</span><span class="s5"></span>
    </footer>
    <div class="player">
      <div class="ghost"><span>树</span><span>列表</span><span>树</span><span>列表</span><span>=work01+...</span></div>
      <div class="track"><i class="played"></i><i class="buffered"></i></div>
    </div>

    <div class="mark m1"></div>
    <div class="badge b1">1</div>
    <div class="hint">双击</div>

    <section class="dialog d1">
      <div class="dtitle"><svg class="ic" viewBox="0 0 16 16" v-html="icons.logo"></svg><span>属性(元件): 常规设备</span><button aria-label="关闭"><svg viewBox="0 0 16 16" v-html="icons.x"></svg></button></div>
      <div class="ttabs">
        <button v-for="(t, i) in ['线圈', '显示', '符号数据/功能数据', '部件', '触点映像设置']" :key="t" :class="{ cur: i === 0 }">{{ t }}</button>
      </div>
      <div class="dpanel">
        <div class="fields">
          <div v-for="f in fields" :key="f.id" class="field">
            <label :for="f.id">{{ f.label }}</label>
            <div v-if="f.kind === 'combo'" class="sel"><select :id="f.id"><option>{{ f.value }}</option></select><i class="chev"></i></div>
            <div v-else class="inrow">
              <input :id="f.id" type="text" :value="f.value" :readonly="f.kind === 'readonly'" />
              <button v-if="f.kind !== 'text'" class="btn dots">...</button>
              <button v-if="f.kind === 'pick'" class="btn sq del" aria-label="删除"><svg class="ic" viewBox="0 0 16 16" v-html="icons.cross"></svg></button>
            </div>
          </div>
        </div>
        <label class="check"><input v-model="mainFunction" type="checkbox" />主功能 (I)</label>
        <fieldset>
          <legend>属性</legend>
          <div class="catrow">
            <label for="cat">类别: (A)</label>
            <div class="sel gray"><select id="cat"><option>所有类别</option></select><i class="chev"></i></div>
            <button class="btn sq first" aria-label="新建"><svg class="ic" viewBox="0 0 16 16" v-html="icons.star"></svg></button>
            <button class="btn sq" aria-label="删除"><svg class="ic" viewBox="0 0 16 16" v-html="icons.cross"></svg></button>
          </div>
          <div class="tablebox">
            <div class="tclip">
              <table>
                <thead><tr><th>属性名</th><th>数值</th></tr></thead>
                <tbody>
                  <tr v-for="(p, i) in properties" :key="p[0]"><td :class="{ focus: i === 0 }">{{ p[0] }}</td><td :class="{ ro: p[2] }">{{ p[1] }}</td></tr>
                </tbody>
              </table>
            </div>
            <div class="hs"><i class="ar lt"></i><i class="thumb" style="flex: 313"></i><i style="flex: 314"></i><i class="ar rt"></i></div>
          </div>
        </fieldset>
      </div>
      <div class="dfoot"><button class="btn big">确定</button><button class="btn big">取消</button><button class="btn big off" disabled>应用 (A)</button></div>
      <i class="resize"></i>
      <div class="mark m2"></div>
      <div class="badge b2">2</div>
      <div class="mark m5"></div>
      <div class="badge b5">5</div>
    </section>

    <section class="dialog d2">
      <div class="dtitle"><svg class="ic" viewBox="0 0 16 16" v-html="icons.logo"></svg><span>设备标识符 – 选择</span><button aria-label="关闭"><svg viewBox="0 0 16 16" v-html="icons.x"></svg></button></div>
      <div class="dpanel">
        <label for="df">筛选器: (F)</label>
        <div class="frow">
          <div class="sel gray"><select id="df"><option>- 未激活 -</option></select><i class="chev"></i></div>
          <button class="btn dots">...</button>
        </div>
        <div class="treebox">
          <div class="tview">
            <div v-for="(r, i) in deviceTree" :key="i" class="trow">
              <i v-for="(c, j) in r.cells" :key="j" class="cell" :class="'c' + ({ '+': 'plus', '-': 'minus', '=': 'open', '-+': 'lastplus', v: 'v' }[c] ?? '')"></i>
              <span v-for="n in r.icons" :key="n" class="ticon"><svg class="ic" viewBox="0 0 16 16" v-html="icons[n]"></svg></span>
              <span class="ttext" :class="{ sel0: r.selected, fill: r.selected, after2: r.icons.length > 1 }">{{ r.text }}</span>
            </div>
          </div>
          <div class="vs"><i class="ar up"></i><i style="flex: 14"></i><i class="thumb" style="flex: 289"></i><i style="flex: 154"></i><i class="ar down"></i></div>
          <div class="hs"><i class="ar lt"></i><i class="thumb" style="flex: 259"></i><i style="flex: 40"></i><i class="ar rt"></i></div>
        </div>
      </div>
      <div class="btabs"><button class="cur">树</button><button>列表</button></div>
      <div class="dfoot"><button class="btn big">下一个 (N)</button><button class="btn big">确定</button><button class="btn big">取消</button></div>
      <i class="resize"></i>
      <div class="mark m3"></div>
      <div class="badge b3">3</div>
      <div class="mark m4"></div>
      <div class="badge b4">4</div>
    </section>
  </div>
</template>

<style>
body { margin: 0; overflow: hidden; }
</style>

<style scoped>
* { box-sizing: border-box; }
.app { position: relative; display: flex; flex-direction: column; height: 100vh; overflow: hidden; background: #fff; color: #111; font: 12px/18px "Noto Sans", "Noto Sans CJK SC", sans-serif; white-space: nowrap; }
button, input, select { font: inherit; color: inherit; margin: 0; padding: 0; border: 0; background: none; border-radius: 0; }
a { color: inherit; text-decoration: none; }
i { flex: none; }
.ic { width: 16px; height: 16px; flex: none; display: block; }

.titlebar { display: flex; align-items: center; height: 24px; padding-left: 2px; gap: 5px; color: #8c8c8c; flex: none; }
.winctl { margin-left: auto; display: flex; gap: 31px; padding-right: 18px; }
.winctl button, .winctl svg { width: 14px; height: 14px; display: block; }
.menubar { display: flex; align-items: center; height: 29px; gap: 12px; padding-left: 10px; border-bottom: 1px solid #ececec; flex: none; }
.menubar .ic { margin-right: -8px; width: 14px; }
.mdictl { margin-left: auto; display: flex; gap: 2px; padding-right: 4px; }
.mdictl button { width: 18px; height: 18px; border: 1px solid #e2e2e2; }
.mdictl svg { width: 12px; height: 12px; display: block; margin: 2px auto; }

.toolbars { flex: none; height: 93px; overflow: hidden; background: #fff; }
.toolbar { display: flex; align-items: center; width: max-content; height: 31px; padding: 0 6px 1px 8px; border-bottom: 1px solid #dcdcdc; background: linear-gradient(#ccc, #ccc) 4px 50% / 1px 24px no-repeat; }
.toolbar:last-child { border-bottom: 0; }
.tool { width: 23px; height: 23px; display: flex; align-items: center; justify-content: center; flex: none; }
.tool.on { background: #cce4f7; box-shadow: inset 0 0 0 1px #9ccbee; }
.sep { width: 8px; height: 22px; background: linear-gradient(#bbb, #bbb) 3px 0 / 1px 100% no-repeat; }
.grip { width: 6px; height: 22px; border-left: 1px dotted #bbb; }

.main { display: flex; flex: 1; min-height: 0; border-bottom: 1px solid #b5b5b5; background: #f0f0f0; }
.left { position: relative; width: 227px; flex: none; display: flex; flex-direction: column; border-top: 1px solid #d5d5d5; }
.panel { display: flex; flex-direction: column; padding: 0 7px 4px 6px; }
.phead { display: flex; align-items: center; height: 16px; flex: none; background: #fff; font-size: 12px; padding-left: 1px; }
.tri { margin-left: auto; border: 3px solid transparent; border-bottom-color: #000; border-top: 0; }
.px { width: 10px; height: 10px; margin: 0 1px 0 7px; }
.pbody { display: flex; flex-direction: column; flex: 1; min-height: 0; padding: 3px 5px 3px 4px; border-right: 2px solid #000; border-bottom: 2px solid #000; }
.frow { display: flex; gap: 10px; margin: 8px 0; }
.frow .sel { flex: 1; }
.sel { position: relative; height: 26px; border: 1px solid #7a7a7a; background: #fff; }
.sel.gray { background: #e1e1e1; border-color: #adadad; }
.sel select { width: 100%; height: 100%; padding: 0 0 2px 4px; appearance: none; outline: none; }
.chev { position: absolute; right: 6px; top: 7px; width: 7px; height: 7px; border: solid #555; border-width: 0 1px 1px 0; transform: rotate(45deg); pointer-events: none; }
.btn { border: 1px solid #adadad; background: #e1e1e1; }
.dots { width: 24px; height: 24px; font-weight: bold; line-height: 14px; align-self: center; flex: none; }
.sunk { height: 25px; margin: 4px 1px 8px; border: 1px solid #777; box-shadow: inset 1px 1px #ccc; background: #f0f0f0; flex: none; }
.treebox { display: grid; grid-template: minmax(0, 1fr) 15px / minmax(0, 1fr) 15px; flex: 1; min-height: 0; padding: 1px; border: 1px solid #828790; background: #fff; }
.treebox.page { height: 265px; flex: none; }
.treebox.plain { margin-top: 4px; }
.tview { overflow: hidden; display: flex; flex-direction: column; }
.tview.end { justify-content: flex-end; margin-bottom: -14px; clip-path: inset(0 0 14px 0); }
.vs { display: flex; flex-direction: column; align-items: stretch; background: #f0f0f0; width: 15px; grid-column: 2; grid-row: 1; }
.hs { display: flex; align-items: stretch; background: #f0f0f0; height: 15px; grid-row: 2; grid-column: 1 / -1; padding-right: 15px; }
.thumb { background: #cdcdcd; }
.ar { width: 17px; height: 15px; display: grid; place-items: center; }
.vs .ar { width: 15px; height: 17px; }
.ar::after { content: ""; width: 5px; height: 5px; border: solid #444; border-width: 2px 0 0 2px; }
.up::after { transform: translateY(1px) rotate(45deg); }
.down::after { transform: translateY(-1px) rotate(225deg); }
.lt::after { transform: rotate(-45deg); }
.rt::after { transform: rotate(135deg); }

.trow { display: flex; height: 20px; align-items: center; flex: none; margin-left: -2px; }
.cell { position: relative; width: 20px; height: 20px; }
.cell::before { content: ""; position: absolute; }
.cv::before, .ct::before, .cl::before, .cplus::before, .cminus::before, .copen::before, .clastplus::before { left: 9px; top: 0; height: 20px; border-left: 1px dotted #999; }
.cl::before, .cminus::before, .clastplus::before { height: 10px; }
.ct, .cl { background: repeating-linear-gradient(90deg, #999 0 1px, transparent 1px 2px) 10px 10px / 12px 1px no-repeat; }
.cplus, .cminus, .copen, .clastplus { background: repeating-linear-gradient(90deg, #999 0 1px, transparent 1px 2px) 14px 10px / 6px 1px no-repeat; }
.cplus::after, .cminus::after, .copen::after, .clastplus::after { content: ""; position: absolute; left: 5px; top: 6px; width: 9px; height: 9px; border: 1px solid #8f8f9f; background: linear-gradient(#30407f, #30407f) 50% 50% / 5px 1px no-repeat, #fff; }
.cplus::after, .clastplus::after { background: linear-gradient(#30407f, #30407f) 50% 50% / 5px 1px no-repeat, linear-gradient(#30407f, #30407f) 50% 50% / 1px 5px no-repeat, #fff; }
.ticon { width: 20px; display: grid; place-items: center; flex: none; }
.ticon + .ticon { width: 14px; }
.ttext { height: 20px; line-height: 20px; padding-left: 4px; flex: none; }
.ttext.after2 { padding-left: 6px; }
.ttext.sel0 { background: #e3e3e3; }
.ttext.fill { flex: 1; }
.bold { font-weight: bold; }

.btabs { display: flex; height: 24px; padding-left: 8px; align-items: flex-start; flex: none; }
.btabs button { height: 22px; padding: 0 5px 2px 4px; border: solid #000; border-width: 0 2px 2px 0; border-radius: 0 0 4px 4px; background: #f0f0f0; }
.btabs .cur { height: 25px; width: 29px; margin-top: -2px; padding: 0 5px 0 4px; border-width: 0 2px 1px 1px; border-color: #999 #000 #444 #999; background: #f0f0f0; }
.hsplit { height: 6px; margin: 0 2px; border-top: 1px solid #a5a5a5; background: #cfd6e6; flex: none; }
.preview { flex: 1; min-height: 0; display: flex; flex-direction: column; padding: 0 7px 3px 5px; }
.preview .phead { height: 17px; }
.pvbody { flex: 1; min-height: 0; display: flex; border: solid #777; border-width: 1px 0 0 1px; background: #fff; }
.pvgrid { display: grid; grid-template-columns: repeat(3, 65px); grid-auto-rows: 68px; overflow: hidden; flex: 1; border-right: 2px solid #777; }
.pvcell { border: solid #dcdcdc; border-width: 0 1px 1px 0; }
.pvcell.first { box-shadow: 0 0 0 1px #000 inset; }
.pvcell svg { display: block; width: 65px; height: 68px; }
.pin { fill: #222; font-family: "Liberation Sans", sans-serif; }
.gauge { position: absolute; left: 2px; top: 523px; width: 8px; height: 52px; border-radius: 4px; background: linear-gradient(#555, #4a6a76 40%, #35a8cc); }
.gauge::after { content: ""; position: absolute; left: -2px; bottom: -5px; width: 12px; height: 12px; border-radius: 50%; background: #3fb0d4; border: 1px solid #477; }

.vsplit { width: 5px; flex: none; border: solid #fff; border-width: 0 1px; background: #c9d0e2; box-shadow: inset -1px 0 #8f96a8; }
.vtools { width: 31px; flex: none; display: flex; flex-direction: column; align-items: center; padding-right: 2px; background: #fff; border: 1px solid #d5d5d5; border-width: 1px 1px 0 0; }
.vgrip { width: 18px; height: 8px; border-bottom: 1px dotted #aaa; margin: -4px 0 4px; }
.vsep { height: 8px; width: 24px; background: linear-gradient(#bbb, #bbb) 0 3px / 100% 1px no-repeat; }
.vend { height: 5px; width: 100%; border-bottom: 1px solid #ccc; }
.vtools.right { width: 32px; border-right: 0; }
.mid { width: 283px; flex: none; border-top: 1px solid #d5d5d5; padding-bottom: 3px; }
.mid .pbody { padding-bottom: 4px; }
.wide { width: 354px; }

.editor { flex: 1; min-width: 0; display: flex; flex-direction: column; border: 1px solid #999; border-width: 1px 1px 0 0; }
.sheet { flex: 1; min-height: 0; display: flex; margin: 8px 4px 0 9px; padding: 5px 5px 5px 6px; border: solid #000; border-width: 0 2px 2px 0; box-shadow: 0 -1px #fff; }
.board { flex: 1; display: grid; grid-template: minmax(0, 1fr) 16px / minmax(0, 1fr) 17px; border: 1px solid #666; border-width: 2px 1px 1px; background: #fff; }
.canvas { width: 100%; height: 100%; display: block; overflow: hidden; min-height: 0; }
.tiny { font: 6px "Liberation Mono", monospace; }
.cname { font: bold 8px "Liberation Mono", monospace; }
.etabs { display: flex; gap: 2px; padding-left: 15px; height: 25px; align-items: flex-start; font: 12px/18px "Liberation Mono", "Noto Sans CJK SC", monospace; flex: none; }
.etabs button { width: 88px; height: 21px; display: flex; align-items: center; gap: 3px; padding-left: 3px; border: solid #000; border-width: 0 1px 2px 0; border-radius: 0 0 2px 2px; font-size: 11px; }
.etabs button span { flex: 1; text-align: left; }
.etabs button:first-child span { padding-left: 9px; }
.etabs .cur { width: 92px; height: 24px; margin-top: -1px; background: #f0f0f0; }
.etabs .ic { width: 12px; height: 14px; }

.status { display: flex; height: 20px; flex: none; align-items: center; background: #fff; }
.status span { height: 18px; padding-left: 4px; border-left: 1px solid #ddd; line-height: 20px; }
.status .s0 { width: 937px; border: 0; padding-left: 3px; flex: none; font-size: 13px; }
.s1 { flex: 1; }
.status .s2 { width: 221px; }
.status .s3 { width: 128px; }
.status .s4 { width: 84px; }
.status .s5 { width: 62px; }
.player { height: 40px; flex: none; display: flex; flex-direction: column; background: linear-gradient(#2d2d2d, #141414 38%, #0c0c0c 60%, #000); }
.ghost { height: 15px; display: flex; padding-left: 277px; color: #070707; line-height: 10px; }
.ghost span:nth-child(2) { margin: 0 160px 0 14px; }
.ghost span:nth-child(4) { margin: 0 230px 0 14px; }
.track { display: flex; height: 4px; margin: 0 32px; background: #575757; border-radius: 2px; }
.played { width: 1217px; background: #fff; }
.buffered { width: 42px; background: #b0b0b0; }

.dialog { position: absolute; background: #f0f0f0; border: 1px solid #8d8d8d; box-shadow: 0 4px 14px rgba(0, 0, 0, .28); }
.d1 { left: 289px; top: 58px; width: 786px; }
.d2 { left: 1452px; top: 128px; width: 440px; }
.dtitle { display: flex; align-items: center; height: 30px; padding: 0 9px 1px 8px; gap: 5px; background: #fff; color: #8c8c8c; }
.dtitle button { margin-left: auto; width: 12px; height: 12px; }
.dtitle button svg { width: 12px; height: 12px; display: block; }
.ttabs { display: flex; align-items: flex-end; height: 48px; padding-left: 27px; }
.ttabs button { height: 21px; padding: 0 4px 0 5px; border-right: 2px solid #111; border-top: 1px solid #fff; }
.ttabs .cur { height: 24px; width: 42px; padding: 0 8px 2px 6px; border-left: 1px solid #fff; }
.dpanel { margin: 0 20px; border: solid #fff; border-width: 1px 0 0 1px; box-shadow: inset -2px -2px #000; }
.d1 .dpanel { padding: 28px 24px 26px 21px; }
.fields { display: grid; grid-template-columns: 1fr 1fr; column-gap: 18px; row-gap: 11px; }
.field label { display: block; height: 18px; margin-bottom: 4px; }
.inrow { display: flex; height: 26px; gap: 2px; }
.inrow input { flex: 1; min-width: 0; height: 26px; padding: 0 4px 2px; border: 1px solid #7a7a7a; background: #fff; outline: none; }
.inrow input:read-only { background: #f0f0f0; }
.sq { width: 24px; height: 24px; display: grid; place-items: center; flex: none; }
.del { margin-left: 8px; align-self: center; }
.check { display: flex; align-items: center; gap: 3px; height: 18px; margin: 13px 0 21px; }
.check input { appearance: none; width: 13px; height: 13px; border: 1px solid #333; background: #fff; position: relative; }
.check input:checked::after { content: ""; position: absolute; left: 3px; top: 0; width: 4px; height: 8px; border: solid #222; border-width: 0 1px 1px 0; transform: rotate(40deg); }
fieldset { margin: 0; padding: 12px 18px 22px 17px; border: 1px solid #dcdcdc; min-width: 0; }
legend { margin-left: -10px; padding: 0 2px; height: 18px; }
.catrow { display: flex; height: 37px; margin-bottom: 5px; }
.catrow label { width: 174px; padding-top: 3px; margin-left: -1px; }
.catrow .sel { width: 384px; }
.catrow .sq { align-self: flex-end; margin-left: 2px; }
.catrow .first { margin-left: auto; }
.tablebox { height: 299px; display: flex; flex-direction: column; border: solid #666; border-width: 2px 0 0 1px; background: #fff; }
.tablebox .hs { padding: 0; }
.tclip { flex: 1; overflow: hidden; }
table { width: 718px; border-collapse: separate; border-spacing: 0; table-layout: fixed; }
th { height: 23px; padding: 0; font-weight: normal; background: #f0f0f0; border: solid #000; border-width: 0 1px 2px 0; }
td { height: 20px; padding: 0 0 0 2px; line-height: 18px; background: #fff; border: solid #6a6a6a; border-width: 0 1px 1px 0; }
td:first-child, td.ro { background: #f0f0f0; }
td.focus { box-shadow: inset 0 0 0 1px #000; }
.dfoot { display: flex; justify-content: flex-end; gap: 20px; padding: 22px 19px; }
.big { width: 121px; height: 28px; padding-bottom: 2px; flex: none; }
.off { background: #ccc; border-color: #bfbfbf; color: #838383; }
.d2 .dpanel { margin: 21px 21px 0 20px; padding: 23px 23px 27px 21px; }
.d2 label { display: block; }
.d2 .frow { margin: 5px 0 8px; }
.d2 .treebox { height: 508px; }
.d2 .btabs { padding-left: 28px; margin-top: -1px; }
.d2 .dfoot { padding: 26px 19px 21px 0; }
.resize { position: absolute; right: 2px; bottom: 3px; width: 9px; height: 9px; background: radial-gradient(#aaa 1px, transparent 1px) 0 0 / 3px 3px; clip-path: polygon(100% 0, 100% 100%, 0 100%); }

.mark { position: absolute; border: 4px solid #ec4336; border-radius: 3px; }
.badge { position: absolute; width: 30px; height: 30px; border-radius: 50%; background: #f93a2f; color: #fff; font: 24px/29px "Noto Sans", sans-serif; font-weight: 500; text-align: center; }
.hint { position: absolute; left: 1290px; top: 745px; font-size: 21px; line-height: 30px; color: #dc4a42; }
.m1 { left: 1271px; top: 645px; width: 81px; height: 49px; }
.b1 { left: 1295px; top: 702px; }
.m2 { left: 306px; top: 132px; width: 48px; height: 33px; }
.b2 { left: 323px; top: 94px; }
.m5 { left: 362px; top: 823px; width: 127px; height: 34px; }
.b5 { left: 413px; top: 802px; }
.m3 { left: 74px; top: 449px; width: 126px; height: 32px; }
.b3 { left: 244px; top: 449px; }
.m4 { left: 163px; top: 709px; width: 116px; height: 33px; }
.b4 { left: 241px; top: 733px; }
</style>
